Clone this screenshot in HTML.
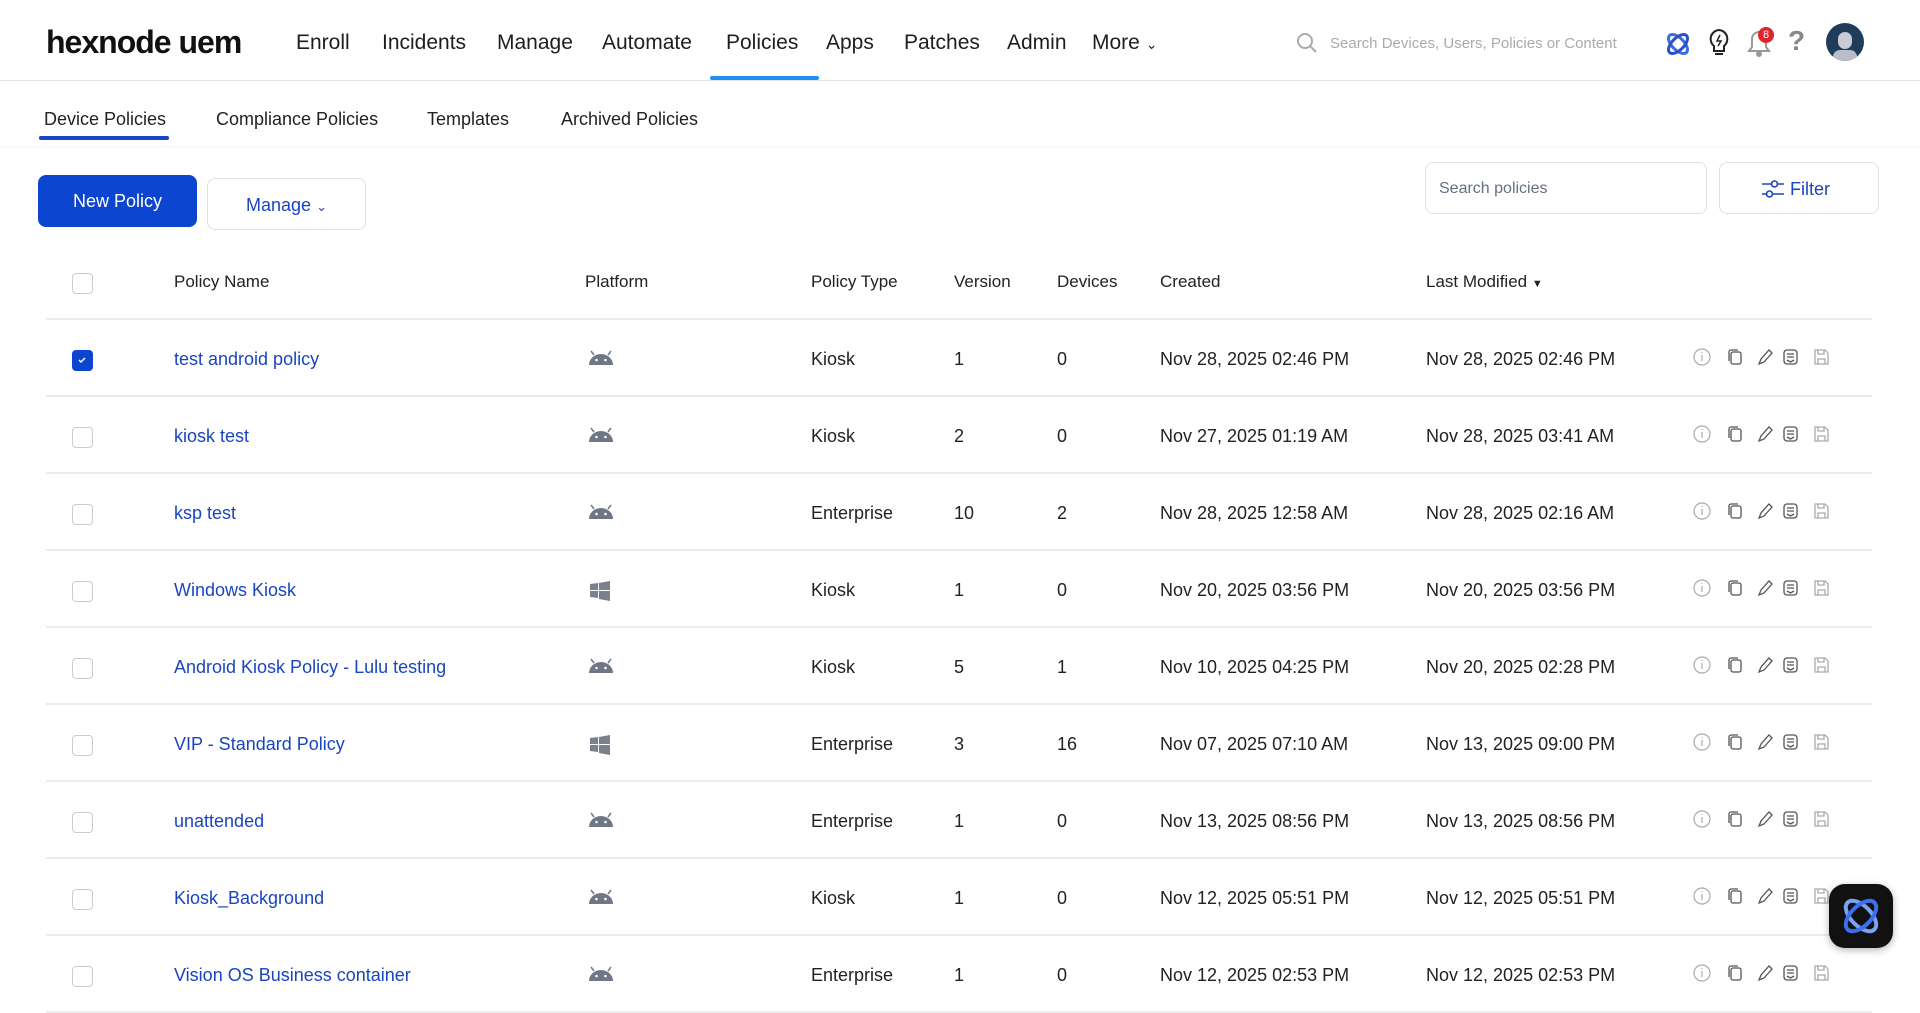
<!DOCTYPE html>
<html><head><meta charset="utf-8"><style>
*{margin:0;padding:0;box-sizing:border-box}
body{width:1920px;height:974px;overflow:hidden;background:#fff;font-family:"Liberation Sans",sans-serif;color:#222;position:relative}
.a{position:absolute;white-space:nowrap}
.nav{font-size:21px;color:#1e1e1e;top:31px}
.tab{font-size:18px;color:#222;top:109px}
.hd{font-size:17px;color:#222;top:272px}
.cell{font-size:18px;color:#222}
.lnk{color:#1a45c2}
.cb{position:absolute;width:21px;height:21px;border:1.5px solid #c9ccd1;border-radius:4px;left:72px}
.line{position:absolute;left:46px;width:1826px;height:2px;background:#ececec}
.ic{position:absolute}
</style></head><body>
<div class="a" style="left:46px;top:24px;font-size:32px;font-weight:bold;letter-spacing:-1px;color:#111">hexnode uem</div>
<div class="a nav" style="left:296px">Enroll</div>
<div class="a nav" style="left:382px">Incidents</div>
<div class="a nav" style="left:497px">Manage</div>
<div class="a nav" style="left:602px">Automate</div>
<div class="a nav" style="left:726px">Policies</div>
<div class="a nav" style="left:826px">Apps</div>
<div class="a nav" style="left:904px">Patches</div>
<div class="a nav" style="left:1007px">Admin</div>
<div class="a nav" style="left:1092px">More <span style="font-size:14px">&#8964;</span></div>
<div class="a" style="left:710px;top:76px;width:109px;height:4px;background:#1e90f0;border-radius:2px"></div>
<div class="a" style="left:0;top:80px;width:1920px;height:1px;background:#e2e2e2"></div>
<svg class="ic" style="left:1296px;top:32px" width="22" height="22" viewBox="0 0 22 22"><circle cx="9" cy="9" r="7" fill="none" stroke="#aaa" stroke-width="2"/><path d="M14 14l6 6" stroke="#aaa" stroke-width="2"/></svg>
<div class="a" style="left:1330px;top:35px;font-size:15px;color:#aaa">Search Devices, Users, Policies or Content</div>
<svg class="ic" style="left:1664px;top:30px" width="28" height="28" viewBox="0 0 28 28"><ellipse cx="14" cy="14" rx="12" ry="6" transform="rotate(45 14 14)" fill="none" stroke="#3a6de0" stroke-width="3"/><ellipse cx="14" cy="14" rx="12" ry="6" transform="rotate(-45 14 14)" fill="none" stroke="#2a4fd0" stroke-width="3"/></svg>
<svg class="ic" style="left:1707px;top:28px" width="24" height="30" viewBox="0 0 24 30"><path d="M12 2a9 9 0 0 0-5 16v5h10v-5a9 9 0 0 0-5-16z" fill="none" stroke="#222" stroke-width="2"/><path d="M13 7l-3 6h4l-3 5" fill="none" stroke="#222" stroke-width="1.5"/><path d="M8 26h8" stroke="#222" stroke-width="2"/></svg>
<svg class="ic" style="left:1746px;top:28px" width="28" height="30" viewBox="0 0 28 30"><path d="M13 4a7 7 0 0 0-7 7v8l-3 4h20l-3-4v-8a7 7 0 0 0-7-7z" fill="none" stroke="#999" stroke-width="2"/><circle cx="13" cy="26" r="3" fill="#999"/></svg>
<div class="a" style="left:1758px;top:27px;width:16px;height:16px;border-radius:8px;background:#e0242c;color:#fff;font-size:11px;text-align:center;line-height:16px">8</div>
<div class="a" style="left:1788px;top:25px;font-size:28px;color:#888;font-weight:bold">?</div>
<div class="a" style="left:1826px;top:23px;width:38px;height:38px;border-radius:50%;background:#1f3c5a;overflow:hidden"><div style="position:absolute;left:12px;top:9px;width:14px;height:17px;border-radius:7px;background:#c8ccd6"></div><div style="position:absolute;left:7px;top:27px;width:24px;height:14px;border-radius:10px;background:#b8bdc8"></div></div>

<div class="a tab" style="left:44px">Device Policies</div>
<div class="a tab" style="left:216px">Compliance Policies</div>
<div class="a tab" style="left:427px">Templates</div>
<div class="a tab" style="left:561px">Archived Policies</div>
<div class="a" style="left:39px;top:136px;width:130px;height:4px;background:#1a45c2;border-radius:2px"></div>
<div class="a" style="left:0;top:146px;width:1920px;height:4px;background:linear-gradient(#f6f6f6,#fff)"></div>

<div class="a" style="left:38px;top:175px;width:159px;height:52px;background:#0c45cf;border-radius:8px;color:#fff;font-size:18px;text-align:center;line-height:52px">New Policy</div>
<div class="a" style="left:207px;top:178px;width:159px;height:52px;border:1px solid #e0e0e0;border-radius:8px;color:#1a45c2;font-size:18px;text-align:center;line-height:52px">Manage <span style="font-size:13px">&#8964;</span></div>
<div class="a" style="left:1425px;top:162px;width:282px;height:52px;border:1px solid #e0e0e0;border-radius:8px;color:#667080;font-size:16px;line-height:52px;padding-left:13px">Search policies</div>
<div class="a" style="left:1719px;top:162px;width:160px;height:52px;border:1px solid #e0e0e0;border-radius:8px;color:#1a45c2;font-size:18px;line-height:52px;padding-left:41px"><svg style="position:absolute;left:41px;top:16px" width="24" height="20" viewBox="0 0 24 20"><path d="M1 5h9M17 5h6M1 15h4M12 15h11" stroke="#1a45c2" stroke-width="1.6"/><circle cx="13.5" cy="5" r="3" fill="none" stroke="#1a45c2" stroke-width="1.6"/><circle cx="8.5" cy="15" r="3" fill="none" stroke="#1a45c2" stroke-width="1.6"/></svg><span style="margin-left:29px">Filter</span></div>

<div class="cb" style="top:273px"></div>
<div class="a hd" style="left:174px">Policy Name</div>
<div class="a hd" style="left:585px">Platform</div>
<div class="a hd" style="left:811px">Policy Type</div>
<div class="a hd" style="left:954px">Version</div>
<div class="a hd" style="left:1057px">Devices</div>
<div class="a hd" style="left:1160px">Created</div>
<div class="a hd" style="left:1426px">Last Modified <span style="font-size:11px">&#9660;</span></div>
<div class="line" style="top:318px"></div>

<div id="rows"></div>
<script>
var R=[["test android policy","a","Kiosk","1","0","Nov 28, 2025 02:46 PM","Nov 28, 2025 02:46 PM"],
["kiosk test","a","Kiosk","2","0","Nov 27, 2025 01:19 AM","Nov 28, 2025 03:41 AM"],
["ksp test","a","Enterprise","10","2","Nov 28, 2025 12:58 AM","Nov 28, 2025 02:16 AM"],
["Windows Kiosk","w","Kiosk","1","0","Nov 20, 2025 03:56 PM","Nov 20, 2025 03:56 PM"],
["Android Kiosk Policy - Lulu testing","a","Kiosk","5","1","Nov 10, 2025 04:25 PM","Nov 20, 2025 02:28 PM"],
["VIP - Standard Policy","w","Enterprise","3","16","Nov 07, 2025 07:10 AM","Nov 13, 2025 09:00 PM"],
["unattended","a","Enterprise","1","0","Nov 13, 2025 08:56 PM","Nov 13, 2025 08:56 PM"],
["Kiosk_Background","a","Kiosk","1","0","Nov 12, 2025 05:51 PM","Nov 12, 2025 05:51 PM"],
["Vision OS Business container","a","Enterprise","1","0","Nov 12, 2025 02:53 PM","Nov 12, 2025 02:53 PM"]];
var h="";
var and='<svg width="26" height="16" viewBox="0 0 26 16"><path d="M1 15a12 11 0 0 1 24 0z" fill="#6f7787"/><path d="M6 5L3 1M20 5l3-4" stroke="#6f7787" stroke-width="1.5"/><circle cx="8.5" cy="10" r="1.3" fill="#fff"/><circle cx="17.5" cy="10" r="1.3" fill="#fff"/></svg>';
var win='<svg width="20" height="20" viewBox="0 0 20 20"><path d="M0 3l8-1v7H0zM9 2l11-2v9H9zM0 10h8v7l-8-1zM9 10h11v10l-11-2z" fill="#7a808c"/></svg>';
var acts='<svg width="150" height="22" viewBox="0 0 150 22"><g fill="none" stroke="#aaa" stroke-width="1.2"><circle cx="10" cy="11" r="8"/><path d="M10 9v6M10 6v1"/></g><g fill="none" stroke="#555" stroke-width="1.3"><rect x="39" y="6" width="10" height="12" rx="2"/><path d="M37 15V6a2 2 0 0 1 2-2h7"/><path d="M67 18l2-5 8-9 3 3-8 9z"/><rect x="92" y="4" width="13" height="14" rx="3"/><path d="M95 8h7M95 11h7M95 14l3.5 2 3.5-2"/></g><g fill="none" stroke="#aaa" stroke-width="1.3"><path d="M123 4h10l3 3v11h-13z"/><path d="M126 4v4h6V4M126 18v-5h7v5"/></g></svg>';
R.forEach(function(r,i){var y=359+i*77;
h+='<div class="cb" style="top:'+(y-9)+'px;'+(i==0?'background:#0c45cf;border-color:#0c45cf':'')+'">'+(i==0?'<svg width="18" height="18" viewBox="0 0 18 18" style="position:absolute;left:0;top:0"><path d="M6 9l2 2 4-4" stroke="#fff" stroke-width="1.5" fill="none"/></svg>':'')+'</div>';
var t=y-10;
h+='<div class="a cell lnk" style="left:174px;top:'+t+'px">'+r[0]+'</div>';
h+='<div class="a" style="left:'+(r[1]=="a"?588:590)+'px;top:'+(y-9)+'px">'+(r[1]=="a"?and:win)+'</div>';
h+='<div class="a cell" style="left:811px;top:'+t+'px">'+r[2]+'</div>';
h+='<div class="a cell" style="left:954px;top:'+t+'px">'+r[3]+'</div>';
h+='<div class="a cell" style="left:1057px;top:'+t+'px">'+r[4]+'</div>';
h+='<div class="a cell" style="left:1160px;top:'+t+'px">'+r[5]+'</div>';
h+='<div class="a cell" style="left:1426px;top:'+t+'px">'+r[6]+'</div>';
h+='<div class="a" style="left:1692px;top:'+(y-13)+'px">'+acts+'</div>';
h+='<div class="line" style="top:'+(y+36)+'px"></div>';});
document.getElementById("rows").innerHTML=h;
</script>
<div class="a" style="left:1829px;top:884px;width:64px;height:64px;border-radius:16px;background:#111;box-shadow:0 2px 8px rgba(0,0,0,.3)"><svg width="64" height="64" viewBox="0 0 64 64"><ellipse cx="32" cy="32" rx="19" ry="10" transform="rotate(45 32 32)" fill="none" stroke="#7aa3f5" stroke-width="4"/><ellipse cx="32" cy="32" rx="19" ry="10" transform="rotate(-45 32 32)" fill="none" stroke="#3d6ef0" stroke-width="4"/></svg></div>
</body></html>
